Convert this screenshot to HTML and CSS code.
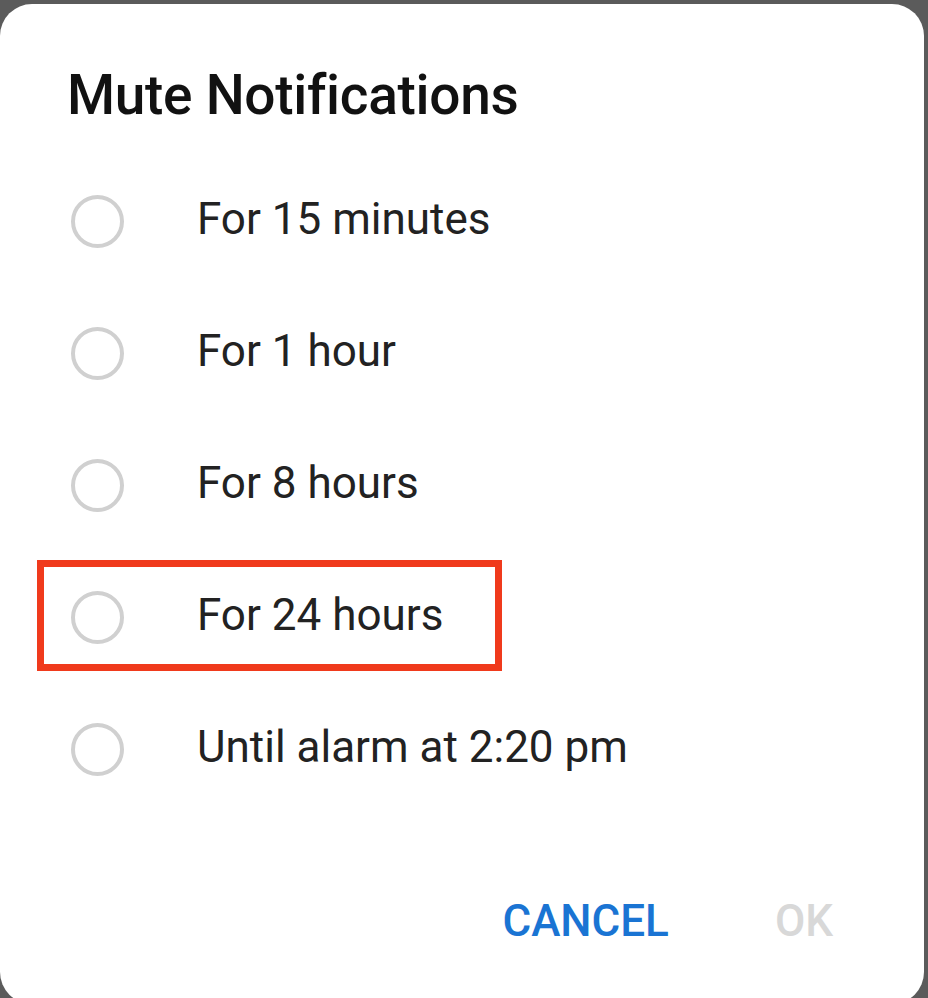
FILE: index.html
```html
<!DOCTYPE html>
<html lang="en">
<head>
  <meta charset="UTF-8" />
  <meta name="viewport" content="width=device-width, initial-scale=1.0" />
  <title>Mute Notifications</title>
  <link rel="stylesheet" href="styles.css">
</head>
<body>
  <div class="dialog">
    <h2>Mute Notifications</h2>

    <div class="options">
      <label class="option">
        <span class="radio"></span>
        <span class="text">For 15 minutes</span>
      </label>
      <label class="option">
        <span class="radio"></span>
        <span class="text">For 1 hour</span>
      </label>
      <label class="option">
        <span class="radio"></span>
        <span class="text">For 8 hours</span>
      </label>
      <label class="option marked">
        <span class="radio"></span>
        <span class="text">For 24 hours</span>
      </label>
      <label class="option">
        <span class="radio"></span>
        <span class="text">Until alarm at 2:20 pm</span>
      </label>
    </div>

    <div class="actions">
      <button class="btn cancel">CANCEL</button>
      <button class="btn ok">OK</button>
    </div>
  </div>
</body>
</html>
```

FILE: styles.css
```css
* {
  box-sizing: border-box;
  margin: 0;
  padding: 0;
  font-family: Roboto, 'Noto Sans', sans-serif;
}

body {
  background: #5b5b5b;
  width: 928px;
  height: 998px;
  overflow: hidden;
  padding-top: 4px;
}

.dialog {
  background: #fff;
  width: 924px;
  height: 1000px;
  border-radius: 32px;
}

h2 {
  font-size: 55px;
  font-weight: 500;
  color: #111;
  line-height: 56px;
  padding: 63px 0 0 67px;
  height: 151px;
  letter-spacing: -0.3px;
}

.option {
  position: relative;
  display: flex;
  align-items: center;
  height: 132px;
}

.radio {
  width: 53px;
  height: 53px;
  border: 4px solid #d0d0d0;
  border-radius: 50%;
  margin-left: 71px;
  margin-right: 73px;
}

.text {
  font-size: 44px;
  color: #222;
  margin-top: -4px;
}

/* rectangle drawn over the screenshot */
.marked::after {
  content: "";
  position: absolute;
  left: 37px;
  top: 9px;
  width: 465px;
  height: 111px;
  box-sizing: border-box;
  border: 7px solid #f03a1c;
}

.actions {
  display: flex;
  justify-content: flex-end;
  gap: 106px;
  padding: 84px 91px 0 0;
}

.btn {
  border: none;
  background: none;
  font-size: 44px;
  font-weight: 500;
  line-height: 44px;
}

.cancel {
  color: #1a74d3;
}

.ok {
  color: #d8d8d8;
}
```
